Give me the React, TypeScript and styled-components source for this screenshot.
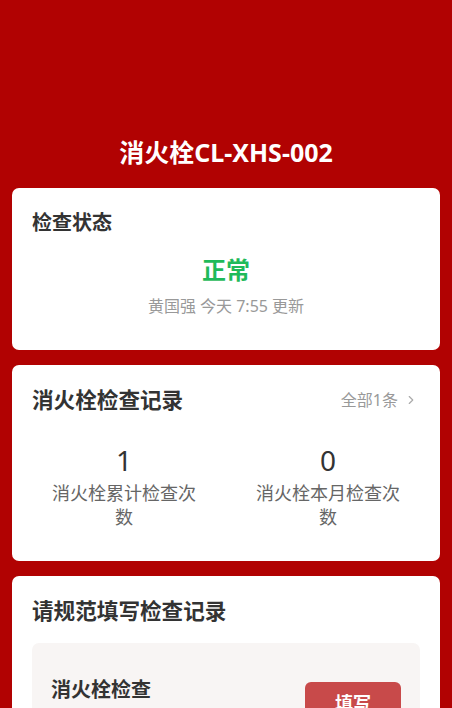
import React from "react";
import styled, { createGlobalStyle } from "styled-components";
import { ChevronRight } from "lucide-react";

const Global = createGlobalStyle`
  html, body { margin: 0; padding: 0; background: #b10202; }
  body { font-family: "Noto Sans", "Noto Sans CJK SC", sans-serif; }
  * { box-sizing: border-box; }
`;

const Page = styled.div`
  min-height: 708px;
  background: #b10202;
  padding: 135px 12px 20px;
  display: flex;
  flex-direction: column;
  gap: 15px;
`;

const Title = styled.h1`
  margin: 0 0 4px;
  text-align: center;
  color: #fff;
  font-size: 25px;
  font-weight: 700;
  line-height: 34px;
`;

const Card = styled.section<{ $pb?: number }>`
  background: #fff;
  border-radius: 7px;
  padding: 20px 20px ${(p) => p.$pb ?? 20}px;
  display: flex;
  flex-direction: column;
`;

const CardHead = styled.div`
  display: flex;
  align-items: center;
  justify-content: space-between;
`;

const CardTitle = styled.h2<{ $size?: number }>`
  margin: 0;
  color: #333;
  font-size: ${(p) => p.$size ?? 21.6}px;
  font-weight: 700;
  line-height: 30px;
`;

const More = styled.div`
  display: flex;
  align-items: center;
  gap: 6px;
  color: #999;
  font-size: 16px;
  line-height: 22px;
  margin-right: 2px;
`;

const Status = styled.div`
  margin-top: 15px;
  text-align: center;
  color: #1fba5a;
  font-size: 24px;
  font-weight: 700;
  line-height: 34px;
`;

const Updated = styled.div`
  margin-top: 8px;
  text-align: center;
  color: #999;
  font-size: 16px;
  line-height: 22px;
`;

const Stats = styled.div`
  display: flex;
  margin: 27px -10px 0;
`;

const Stat = styled.div`
  flex: 1;
  padding: 0 27px;
  display: flex;
  flex-direction: column;
  align-items: center;
  text-align: center;
`;

const StatNum = styled.div`
  color: #333;
  font-size: 28px;
  line-height: 36px;
`;

const StatLabel = styled.div`
  color: #666;
  font-size: 18px;
  line-height: 24px;
  margin-top: 3px;
`;

const Task = styled.div`
  margin-top: 17px;
  background: #f8f5f4;
  border-radius: 7px;
  padding: 32px 19px 30px 19px;
  display: flex;
  align-items: flex-start;
  justify-content: space-between;
`;

const TaskName = styled.div`
  color: #333;
  font-size: 20px;
  font-weight: 700;
  line-height: 30px;
`;

const FillButton = styled.button`
  margin-top: 7px;
  width: 96px;
  height: 40px;
  border: none;
  border-radius: 6px;
  background: #c84a4a;
  color: #fff;
  font-family: inherit;
  font-size: 18px;
  font-weight: 700;
`;

export default function App() {
  return (
    <>
      <Global />
      <Page>
        <Title>消火栓CL-XHS-002</Title>
        <Card $pb={33}>
          <CardTitle $size={20}>检查状态</CardTitle>
          <Status>正常</Status>
          <Updated>黄国强 今天 7:55 更新</Updated>
        </Card>
        <Card $pb={32}>
          <CardHead>
            <CardTitle>消火栓检查记录</CardTitle>
            <More>
              全部1条
              <ChevronRight size={14} color="#aaa" strokeWidth={2} />
            </More>
          </CardHead>
          <Stats>
            <Stat>
              <StatNum>1</StatNum>
              <StatLabel>消火栓累计检查次数</StatLabel>
            </Stat>
            <Stat>
              <StatNum>0</StatNum>
              <StatLabel>消火栓本月检查次数</StatLabel>
            </Stat>
          </Stats>
        </Card>
        <Card>
          <CardTitle>请规范填写检查记录</CardTitle>
          <Task>
            <TaskName>消火栓检查</TaskName>
            <FillButton>填写</FillButton>
          </Task>
        </Card>
      </Page>
    </>
  );
}
